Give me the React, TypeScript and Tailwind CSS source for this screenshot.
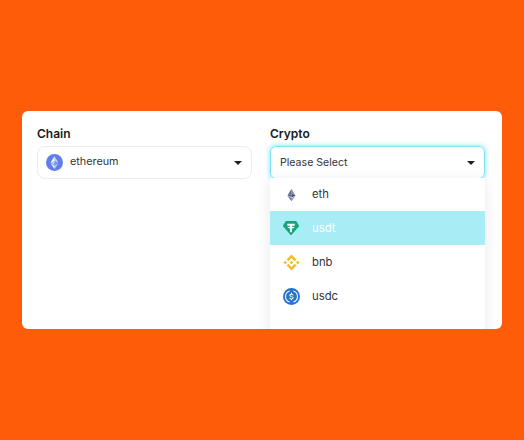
const font = "font-['Inter',sans-serif]";

function Caret() {
  return (
    <svg width="8" height="4" viewBox="0 0 8 4" className="shrink-0">
      <path d="M0 0h8L4 4z" fill="#1f1f24" />
    </svg>
  );
}

function EthCircle() {
  return (
    <svg width="17" height="17" viewBox="0 0 32 32" className="shrink-0">
      <circle cx="16" cy="16" r="16" fill="#627eea" />
      <path d="M16 4v9l7.500 3.300z" fill="#fff" fillOpacity=".6" />
      <path d="M16 4 8.500 16.300 16 13z" fill="#fff" />
      <path d="M16 22.100V28l7.500-10.400z" fill="#fff" fillOpacity=".6" />
      <path d="M16 28v-5.900l-7.500-4.500z" fill="#fff" />
      <path d="m16 20.700 7.500-4.400L16 13z" fill="#fff" fillOpacity=".2" />
      <path d="M8.500 16.300 16 20.700V13z" fill="#fff" fillOpacity=".6" />
    </svg>
  );
}

function EthIcon() {
  return (
    <svg width="9" height="14" viewBox="6 1 20 30">
      <path d="M16 2v11l9 4.200z" fill="#8a92b2" />
      <path d="M16 2 7 17.200l9-4.200z" fill="#62688f" />
      <path d="M16 23.300V30l9-12.500z" fill="#8a92b2" />
      <path d="M16 30v-6.700l-9-5.800z" fill="#62688f" />
      <path d="m16 21.500 9-4.300-9-4.200z" fill="#454a75" />
      <path d="m7 17.200 9 4.300V13z" fill="#62688f" />
    </svg>
  );
}

function UsdtIcon() {
  return (
    <svg width="16" height="14" viewBox="0 0 34 30">
      <path d="M7 0h20a2 2 0 0 1 1.600.8L34 9.500a2 2 0 0 1-.3 2.400L18.400 29.400a2 2 0 0 1-2.800 0L.3 11.900A2 2 0 0 1 0 9.500L5.400.8A2 2 0 0 1 7 0z" fill="#1ba27a" />
      <path d="M9 6h16v4h-6v2.300c3 .2 5.500.9 5.500 1.800s-2.500 1.600-5.500 1.800V24h-4v-8.100c-3-.2-5.500-.9-5.500-1.800s2.500-1.600 5.500-1.800V10H9z" fill="#fff" />
    </svg>
  );
}

function BnbIcon() {
  return (
    <svg width="17" height="17" viewBox="5.500 5.500 21 21">
      <path
        d="M12.116 14.404 16 10.520l3.886 3.886 2.260-2.260L16 6l-6.144 6.144zM6 16l2.260-2.260L10.520 16l-2.260 2.260zm6.116 1.596L16 21.480l3.886-3.886 2.260 2.259L16 26l-6.144-6.144zM21.480 16l2.260-2.260L26 16l-2.260 2.260zm-3.188 0L16 18.294 13.705 16 16 13.706z"
        fill="#f3ba2f"
      />
    </svg>
  );
}

function UsdcIcon() {
  return (
    <svg width="17" height="17" viewBox="0 0 32 32">
      <circle cx="16" cy="16" r="16" fill="#2775ca" />
      <path d="M12.500 26.500a11 11 0 0 1 0-21M19.500 5.500a11 11 0 0 1 0 21" fill="none" stroke="#fff" strokeWidth="2" />
      <path d="M20 18.500c0-2-1.300-2.700-3.800-3-1.800-.3-2.200-.7-2.200-1.500s.6-1.300 1.800-1.300c1.100 0 1.700.4 2 1.300h2c-.2-1.500-1.200-2.500-2.800-2.800V9h-2v1.700c-1.800.3-3 1.500-3 3.100 0 1.900 1.200 2.600 3.700 2.900 1.700.3 2.300.7 2.300 1.600s-.9 1.500-2 1.500c-1.500 0-2-.6-2.200-1.500h-2c.2 1.700 1.300 2.800 3.200 3.100V23h2v-1.600c1.800-.3 3-1.500 3-2.900z" fill="#fff" />
    </svg>
  );
}

const options = [
  { name: 'eth', icon: <EthIcon /> },
  { name: 'usdt', icon: <UsdtIcon />, active: true },
  { name: 'bnb', icon: <BnbIcon /> },
  { name: 'usdc', icon: <UsdcIcon /> },
];

export default function App() {
  return (
    <div className={`flex h-[440px] items-center justify-center bg-[#ff5c0a] ${font}`}>
      <div className="relative h-[218px] w-[480px] overflow-hidden rounded-[6px] bg-white pl-[15px] pr-[17px] pt-[15px]">
        <div className="grid grid-cols-2 gap-x-[18px]">
          <div>
            <div className="mb-[4px] h-[16px] text-[12px] font-semibold leading-[16px] text-[#1a1a1f]">Chain</div>
            <div className="flex h-[33px] items-center rounded-[8px] border border-[#ececee] pl-[8px] pr-[9px]">
              <EthCircle />
              <span className="ml-[7px] flex-1 text-[10.8px] text-[#33333a]">ethereum</span>
              <Caret />
            </div>
          </div>
          <div className="relative">
            <div className="mb-[4px] h-[16px] text-[12px] font-semibold leading-[16px] text-[#1a1a1f]">Crypto</div>
            <div className="flex h-[33px] items-center rounded-[6px] border border-[#7fe3f2] pl-[9px] pr-[9px] shadow-[0_0_4px_1px_rgba(127,227,242,0.8)]">
              <span className="flex-1 text-[10.6px] text-[#33333a]">Please Select</span>
              <Caret />
            </div>
            <div className="absolute left-0 right-0 top-[52px] h-[160px] bg-white shadow-[0_3px_14px_rgba(0,0,0,0.09)]">
              {options.map((o, i) => (
                <div
                  key={o.name}
                  className={`flex items-center ${i === 0 ? 'h-[33px]' : 'h-[34px]'} ${o.active ? 'bg-[#a8ecf5] text-white' : 'text-[#33333a]'}`}
                >
                  <span className="flex w-[42px] justify-center">{o.icon}</span>
                  <span className="text-[11.3px]">{o.name}</span>
                </div>
              ))}
            </div>
          </div>
        </div>
      </div>
    </div>
  );
}
